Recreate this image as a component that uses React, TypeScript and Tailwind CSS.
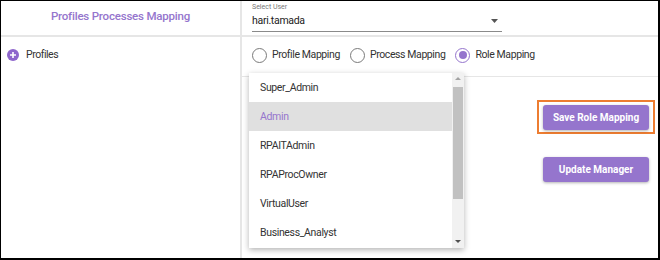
import React from 'react';

const roles = ['Super_Admin', 'Admin', 'RPAITAdmin', 'RPAProcOwner', 'VirtualUser', 'Business_Analyst'];

const Radio = ({ label, checked }: { label: string; checked?: boolean }) => (
  <label className="flex items-center gap-[5px]">
    <span
      className={`flex h-[15px] w-[15px] items-center justify-center rounded-full border-[1.5px] ${
        checked ? 'border-[#9575cd]' : 'border-[#7a7a7a]'
      }`}
    >
      {checked && <span className="h-[8px] w-[8px] rounded-full bg-[#9575cd]" />}
    </span>
    <span className="text-[10.5px] tracking-[-0.4px] text-[#333]">{label}</span>
  </label>
);

export default function App() {
  return (
    <div
      className="relative flex h-[260px] w-[660px] border-t border-l border-r-2 border-b-2 border-black bg-white"
      style={{ fontFamily: 'Roboto, "Liberation Sans", sans-serif' }}
    >
      {/* left column */}
      <div className="flex w-[241px] flex-col border-r-2 border-[#e6e6e6]">
        <div className="flex h-[36px] items-center justify-center border-b-2 border-[#e6e6e6] pb-[3px] text-[11.5px] tracking-[-0.2px] font-medium text-[#9575cd]">
          Profiles Processes Mapping
        </div>
        <div className="flex items-center gap-[7px] pl-[6px] pt-[10px]">
          <span className="flex h-[12px] w-[12px] items-center justify-center rounded-full bg-[#8e66cc]">
            <svg width="8" height="8" viewBox="0 0 8 8">
              <path d="M4 1v6M1 4h6" stroke="white" strokeWidth="1.6" />
            </svg>
          </span>
          <span className="text-[10.5px] tracking-[-0.45px] text-[#333]">Profiles</span>
        </div>
      </div>

      {/* right column */}
      <div className="flex flex-1 flex-col">
        <div className="h-[36px] border-b-2 border-[#e6e6e6] pl-[10px] pt-[1px]">
          <div className="w-[250px] border-b border-[#8a8a8a]">
            <div className="text-[7px] leading-[10px] text-[#777]">Select User</div>
            <div className="flex items-center justify-between pr-[4px] pb-[4px] pt-[2px]">
              <span className="text-[10.5px] leading-[13px] tracking-[-0.3px] text-[#222]">hari.tamada</span>
              <svg width="7" height="4" viewBox="0 0 7 4">
                <path d="M0 0h7L3.5 4z" fill="#555" />
              </svg>
            </div>
          </div>
        </div>

        <div className="flex h-[40px] items-center gap-[10px] border-b border-[#e6e6e6] pl-[10px] pb-[3px]">
          <Radio label="Profile Mapping" />
          <Radio label="Process Mapping" />
          <Radio label="Role Mapping" checked />
        </div>

        <div className="flex flex-1 flex-col items-end pr-[3px] pt-[23px]">
          <div className="border-2 border-[#ed7d31] px-[4px] py-[2px]">
            <button className="h-[25px] w-[106px] rounded-[3px] bg-[#9575cd] text-[10px] font-bold text-white shadow-[0_1px_3px_rgba(0,0,0,0.3)]">
              Save Role Mapping
            </button>
          </div>
          <button className="mr-[6px] mt-[23px] h-[25px] w-[106px] rounded-[3px] bg-[#9575cd] text-[10px] font-bold text-white shadow-[0_1px_3px_rgba(0,0,0,0.3)]">
            Update Manager
          </button>
        </div>
      </div>

      {/* role dropdown menu */}
      <div className="absolute left-[248px] top-[72px] flex h-[175px] w-[215px] bg-white shadow-[0_2px_6px_rgba(0,0,0,0.3)]">
        <ul className="flex-1">
          {roles.map((r) => (
            <li
              key={r}
              className={`flex h-[29px] items-center pl-[11px] text-[10.5px] tracking-[-0.35px] ${
                r === 'Admin' ? 'bg-[#e0e0e0] text-[#9575cd]' : 'text-[#333]'
              }`}
            >
              {r}
            </li>
          ))}
        </ul>
        <div className="flex w-[12px] flex-col items-center bg-[#f1f1f1]">
          <svg className="mt-[4px]" width="6" height="3" viewBox="0 0 6 3">
            <path d="M0 3h6L3 0z" fill="#a3a3a3" />
          </svg>
          <div className="mt-[7px] h-[112px] w-[10px] bg-[#c1c1c1]" />
          <div className="flex-1" />
          <svg className="mb-[5px]" width="6" height="3" viewBox="0 0 6 3">
            <path d="M0 0h6L3 3z" fill="#505050" />
          </svg>
        </div>
      </div>
    </div>
  );
}
